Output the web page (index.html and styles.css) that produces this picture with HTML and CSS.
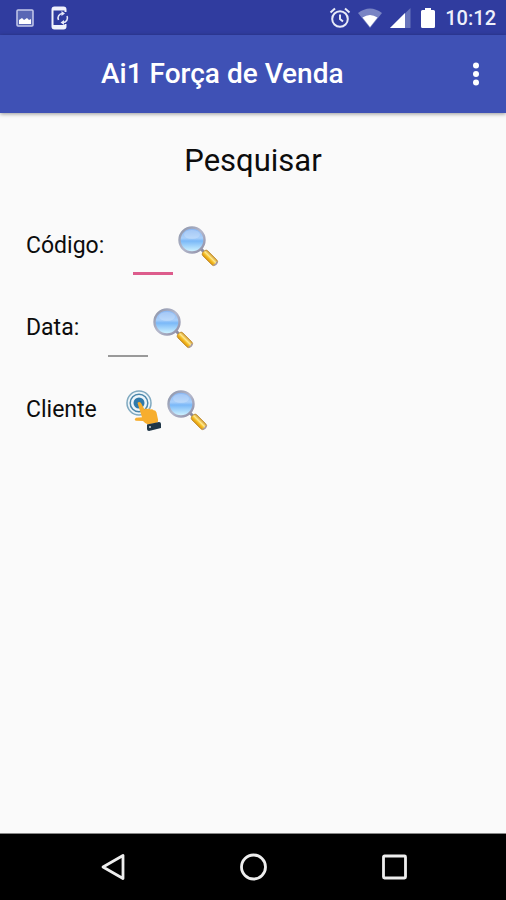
FILE: index.html
```html
<!DOCTYPE html>
<html lang="pt-BR">
<head>
<meta charset="utf-8">
<meta name="viewport" content="width=device-width, initial-scale=1">
<title>Ai1 Força de Venda</title>
<link rel="stylesheet" href="styles.css">
</head>
<body>
<svg class="defs" aria-hidden="true">
  <defs>
    <linearGradient id="lens" x1="0" y1="0" x2="0" y2="1">
      <stop offset="0" stop-color="#86b4f2"/>
      <stop offset=".42" stop-color="#a9cffa"/>
      <stop offset=".54" stop-color="#7ab8f8"/>
      <stop offset="1" stop-color="#d6f8ff"/>
    </linearGradient>
    <linearGradient id="ring" x1="0" y1="0" x2="1" y2="1">
      <stop offset="0" stop-color="#8b93a8"/>
      <stop offset=".5" stop-color="#b4b8cc"/>
      <stop offset="1" stop-color="#8c8ca4"/>
    </linearGradient>
    <linearGradient id="handle" x1="0" y1="1" x2="0" y2="0">
      <stop offset="0" stop-color="#d8930e"/>
      <stop offset=".35" stop-color="#f6bd22"/>
      <stop offset=".6" stop-color="#ffe88a"/>
      <stop offset="1" stop-color="#d19a2c"/>
    </linearGradient>
    <symbol id="magnifier" viewBox="0 0 41 41">
      <path d="M23 23l4 4" stroke="#8f8c9c" stroke-width="3"/>
      <g transform="rotate(45 26 26)">
        <rect x="25.500" y="22.500" width="17.500" height="7" rx="2.500" fill="url(#handle)" stroke="#bd8a30" stroke-width=".8"/>
        <path d="M42 23.500q2 2.500 0 5" fill="none" stroke="#a69ba6" stroke-width="1.500"/>
      </g>
      <circle cx="14" cy="14" r="12.500" fill="url(#lens)" stroke="url(#ring)" stroke-width="2.400"/>
      <ellipse cx="14" cy="8.500" rx="8" ry="4.500" fill="#fff" opacity=".2"/>
    </symbol>
  </defs>
</svg>
<div class="screen">
  <div class="status-bar">
    <div class="status-group notices">
      <svg width="18" height="18" viewBox="0 0 18 18"><rect x="1" y="1" width="16" height="16" rx="1" fill="#5967b5" stroke="#c3c9ea" stroke-width="1.500"/><path d="M3 15v-4l3-2 2 2 3-2 2 2 2-1v5z" fill="#fff"/></svg>
      <svg width="20" height="24" viewBox="0 0 20 24"><path d="M15.500 6V3.500q0-2-2-2H4.500q-2 0-2 2v17q0 2 2 2h9q2 0 2-2V18" fill="none" stroke="#f0f2fc" stroke-width="2"/><path d="M3 3h12M3 20.500h12" stroke="#f0f2fc" stroke-width="3"/><path d="M8.500 14a4.500 4.500 0 0 1 4-6.500M17 10a4.500 4.500 0 0 1-4 6.500" fill="none" stroke="#e6e9f8" stroke-width="1.600"/><path d="M11.500 5l3.500 2.500-3.500 2.500zM14 14l-3.500 2.500L14 19z" fill="#e6e9f8"/></svg>
    </div>
    <div class="status-group">
      <svg width="22" height="22" viewBox="0 0 22 22" fill="none" stroke="#e8ebf8" stroke-width="2"><circle cx="11" cy="12" r="7.800"/><path d="M11 7.500V12l3 2.500M1.500 5.500l4.500-4M20.500 5.500l-4.500-4"/></svg>
      <svg width="26" height="20" viewBox="0 0 26 20"><path d="M1 5Q13-4 25 5L13 20z" fill="#7984c4"/><path d="M5.500 9.500Q13 4.500 20.500 9.500L13 19z" fill="#fff"/></svg>
      <svg width="22" height="22" viewBox="0 0 22 22"><path d="M21.500 1v20H1z" fill="#6874bb"/><path d="M16 6v15H1z" fill="#fff"/></svg>
      <svg class="battery" width="14" height="22" viewBox="0 0 14 22"><path d="M4 1h6v2h2.500q1.500 0 1.500 1.500v15q0 1.500-1.500 1.500h-11Q0 21 0 19.500v-15Q0 3 1.500 3H4z" fill="#fff"/></svg>
      <time class="clock">10:12</time>
    </div>
  </div>
  <header class="app-bar">
    <h1>Ai1 Força de Venda</h1>
    <button class="icon-button menu" type="button" aria-label="Mais opções">
      <svg width="8" height="24" viewBox="0 0 8 24" fill="#fff"><circle cx="4" cy="3.500" r="3"/><circle cx="4" cy="12" r="3"/><circle cx="4" cy="20.500" r="3"/></svg>
    </button>
  </header>
  <main>
    <h2>Pesquisar</h2>
    <form class="search-form">
      <div class="row">
        <label for="codigo">Código:</label>
        <input class="field active" id="codigo" type="text">
        <button class="icon-button" type="button" aria-label="Pesquisar por código"><svg width="41" height="41"><use href="#magnifier"/></svg></button>
      </div>
      <div class="row">
        <label for="data">Data:</label>
        <input class="field" id="data" type="text">
        <button class="icon-button" type="button" aria-label="Pesquisar por data"><svg width="41" height="41"><use href="#magnifier"/></svg></button>
      </div>
      <div class="row">
        <span class="client">Cliente</span>
        <button class="icon-button" type="button" aria-label="Selecionar cliente">
          <svg width="36" height="41" viewBox="0 0 36 41">
            <g fill="none" stroke="#7fa9c0" stroke-width="1.500"><circle cx="13" cy="13" r="12" fill="#edf5f9"/><circle cx="13" cy="13" r="8.800" stroke="#4a86ab"/></g>
            <circle cx="13" cy="13" r="5.500" fill="#2f79aa"/>
            <path d="M11.500 13q1.500-2 3.500 0l3.500 6.500q1-1.500 3-.5 1.500-1 3 .5 2-1 3 .8 2-.3 3 2.200l1.500 7q.5 3-2 3.500l-8 1.500q-3-1-5-3.500l-7-.2q-2.500-1 0-3l6-.5z" fill="#f7ae2e"/>
            <path d="M21 34.500l12-2.500q2 0 2 2v4l-12 3q-2 0-2-2z" fill="#1f3647"/>
            <circle cx="24" cy="37" r=".9" fill="#d7e0e6"/>
          </svg>
        </button>
        <button class="icon-button" type="button" aria-label="Pesquisar por cliente"><svg width="41" height="41"><use href="#magnifier"/></svg></button>
      </div>
    </form>
  </main>
  <nav class="nav-bar">
    <button class="icon-button" type="button" aria-label="Voltar"><svg width="28" height="28" viewBox="0 0 28 28"><path d="M25 2.500v23L5 14z" fill="none" stroke="#eee" stroke-width="2.800" stroke-linejoin="round"/></svg></button>
    <button class="icon-button" type="button" aria-label="Início"><svg width="28" height="28" viewBox="0 0 28 28"><circle cx="14.500" cy="14" r="12" fill="none" stroke="#eee" stroke-width="2.800"/></svg></button>
    <button class="icon-button" type="button" aria-label="Recentes"><svg width="28" height="28" viewBox="0 0 28 28"><rect x="3.500" y="3" width="22" height="22" rx="1" fill="none" stroke="#eee" stroke-width="2.800"/></svg></button>
  </nav>
</div>
</body>
</html>
```

FILE: styles.css
```css
* {
  box-sizing: border-box;
}

body {
  margin: 0;
  font-family: Roboto, "Liberation Sans", sans-serif;
  color: #0c0c0c;
  background: #fafafa;
}

svg {
  display: block;
}

.defs {
  position: absolute;
  width: 0;
  height: 0;
}

.screen {
  display: flex;
  flex-direction: column;
  min-height: 100vh;
}

.status-bar {
  display: flex;
  align-items: center;
  justify-content: space-between;
  height: 35px;
  padding: 0 10px 0 16px;
  background: #303c9f;
}

.status-group {
  display: flex;
  align-items: center;
  gap: 6px;
}

.notices {
  gap: 16px;
}

.battery {
  margin: 0 4px;
}

.clock {
  color: #eef0fb;
  font-size: 20px;
  font-weight: 500;
  line-height: 24px;
}

.app-bar {
  display: flex;
  align-items: center;
  justify-content: space-between;
  height: 78px;
  padding: 0 26px 0 101px;
  color: #fff;
  background: #3f51b5;
  box-shadow: 0 1px 4px rgba(0, 0, 0, 0.4);
}

h1 {
  margin: 0;
  font-size: 28px;
  font-weight: 500;
  line-height: 38px;
}

.icon-button {
  flex: none;
  padding: 0;
  border: 0;
  background: none;
}

main {
  flex: 1;
  padding: 28px 26px;
}

h2 {
  margin: 0 0 24px;
  font-size: 31px;
  font-weight: 400;
  line-height: 40px;
  text-align: center;
}

.row {
  display: flex;
  align-items: center;
  height: 82px;
  gap: 5px;
}

.row label,
.client {
  margin-right: 24px;
  font-size: 23px;
  line-height: 28px;
}

.field {
  width: 40px;
  height: 58px;
  padding: 0;
  border: 0;
  border-bottom: 2px solid #999;
  outline: 0;
  background: none;
  font: inherit;
  font-size: 23px;
}

.field.active,
.field:focus {
  border-bottom: 3px solid #dd5c8c;
}

.nav-bar {
  display: flex;
  align-items: center;
  justify-content: space-between;
  height: 67px;
  padding: 0 98px;
  border-top: 1px solid #888;
  background: #000;
}
```
